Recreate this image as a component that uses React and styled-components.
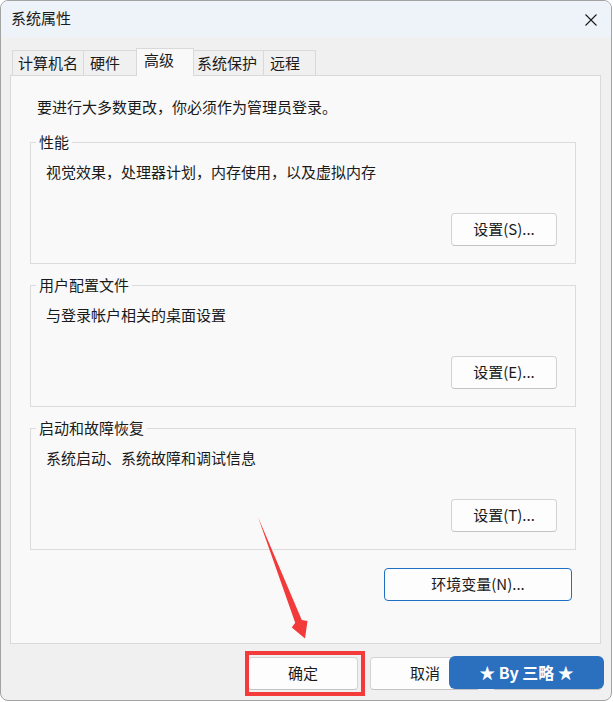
import React from "react";
import styled, { createGlobalStyle } from "styled-components";

const GlobalStyle = createGlobalStyle`
  html, body { margin: 0; padding: 0; background: #ffffff; }
  body {
    font-family: "Noto Sans CJK SC", "Noto Sans", sans-serif;
    color: #1a1a1a;
  }
  * { box-sizing: border-box; }
`;

const Window = styled.div`
  position: relative;
  width: 612px;
  height: 701px;
  border: 1px solid #a3a3a3;
  border-radius: 8px;
  overflow: hidden;
  background: #f0f0f0;
  display: flex;
  flex-direction: column;
`;

const TitleBar = styled.div`
  height: 36px;
  flex: none;
  background: #eef3f9;
  display: flex;
  align-items: center;
  justify-content: space-between;
  padding: 0 14px 2px 10px;
`;

const Title = styled.span`
  font-size: 15px;
  line-height: 20px;
`;

const CloseButton = styled.div`
  width: 12px;
  height: 12px;
  display: flex;
  margin-top: 3px;
`;

const TabStrip = styled.div`
  display: flex;
  align-items: flex-start;
  height: 28px;
  margin: 11px 0 0 11px;
  position: relative;
  z-index: 1;
`;

const Tab = styled.div`
  width: ${(p) => p.$w}px;
  margin-left: ${(p) => p.$ml}px;
  padding-left: ${(p) => p.$pl}px;
  height: ${(p) => (p.$active ? 28 : 25)}px;
  margin-top: ${(p) => (p.$active ? 0 : 2)}px;
  border: 1px solid #d9d9d9;
  border-bottom: none;
  background: ${(p) => (p.$active ? "#f9f9f9" : "#f0f0f0")};
  position: relative;
  z-index: ${(p) => (p.$active ? 2 : 1)};
  font-size: 15px;
  line-height: 20px;
  padding-top: ${(p) => (p.$active ? 1 : 2)}px;
  white-space: nowrap;
`;

const Panel = styled.div`
  margin: -1px 10px 0 9px;
  height: 569px;
  flex: none;
  background: #f9f9f9;
  border: 1px solid #d9d9d9;
  padding: 21px 24px 0 19px;
  display: flex;
  flex-direction: column;
`;

const Intro = styled.div`
  font-size: 15px;
  line-height: 20px;
  padding-left: 7px;
  margin-bottom: 15px;
`;

const Group = styled.fieldset`
  margin: 0 0 11px 0;
  padding: 9px 18px 17px 15px;
  border: 1px solid #dcdcdc;
  min-width: 0;
  display: flex;
  flex-direction: column;
`;

const Legend = styled.legend`
  font-size: 15px;
  line-height: 19px;
  padding: 0 3px 2px;
  margin-left: -10px;
`;

const Desc = styled.div`
  font-size: 15px;
  line-height: 20px;
  margin-bottom: 31px;
`;

const ButtonRow = styled.div`
  display: flex;
  justify-content: flex-end;
  padding-right: ${(p) => p.$pr || 0}px;
  margin-top: ${(p) => p.$mt || 0}px;
`;

const Button = styled.div`
  width: ${(p) => p.$w}px;
  height: 33px;
  flex: none;
  display: flex;
  align-items: center;
  justify-content: center;
  padding-bottom: 2px;
  background: #fdfdfd;
  border: 1px solid ${(p) => (p.$focus ? "#1f6fc5" : "#d3d3d3")};
  border-bottom-color: ${(p) => (p.$focus ? "#1f6fc5" : "#c3c3c3")};
  border-radius: 4px;
  font-size: 15px;
  line-height: 20px;
  color: #1a1a1a;
`;

const BottomBar = styled.div`
  display: flex;
  justify-content: flex-end;
  gap: 12px;
  padding: 13px 9px 0 0;
`;

const Overlay = styled.svg`
  position: absolute;
  left: -1px;
  top: -1px;
  width: 613px;
  height: 702px;
  pointer-events: none;
  z-index: 5;
`;

const RedBox = styled.div`
  position: absolute;
  left: 244px;
  top: 650px;
  width: 120px;
  height: 45px;
  border: 4px solid #f33b3b;
  z-index: 4;
  pointer-events: none;
`;

const Watermark = styled.div`
  position: absolute;
  left: 448px;
  top: 655px;
  width: 155px;
  height: 33px;
  border-radius: 6px;
  background: #2b6fbf;
  color: #ffffff;
  font-family: "Noto Sans CJK SC", "Noto Sans", sans-serif;
  font-weight: 700;
  font-size: 16px;
  line-height: 20px;
  padding-bottom: 1px;
  display: flex;
  align-items: center;
  justify-content: center;
  z-index: 6;
`;

const tabs = [
  { label: "计算机名", w: 72, ml: 0, pl: 5 },
  { label: "硬件", w: 55, ml: -1, pl: 6 },
  { label: "高级", w: 58, ml: -2, pl: 7, active: true },
  { label: "系统保护", w: 71, ml: -1, pl: 3 },
  { label: "远程", w: 53, ml: -1, pl: 6 },
];

const groups = [
  { legend: "性能", desc: "视觉效果，处理器计划，内存使用，以及虚拟内存", btn: "设置(S)..." },
  { legend: "用户配置文件", desc: "与登录帐户相关的桌面设置", btn: "设置(E)..." },
  { legend: "启动和故障恢复", desc: "系统启动、系统故障和调试信息", btn: "设置(T)..." },
];

export default function App() {
  return (
    <>
      <GlobalStyle />
      <Window>
        <TitleBar>
          <Title>系统属性</Title>
          <CloseButton>
            <svg width="12" height="12" viewBox="0 0 12 12">
              <path d="M0.5 0.5 L11.5 11.5 M11.5 0.5 L0.5 11.5" stroke="#1a1a1a" strokeWidth="1.1" fill="none" />
            </svg>
          </CloseButton>
        </TitleBar>

        <TabStrip>
          {tabs.map((t) => (
            <Tab key={t.label} $w={t.w} $ml={t.ml} $pl={t.pl} $active={t.active}>
              {t.label}
            </Tab>
          ))}
        </TabStrip>

        <Panel>
          <Intro>要进行大多数更改，你必须作为管理员登录。</Intro>
          {groups.map((g) => (
            <Group key={g.legend}>
              <Legend>{g.legend}</Legend>
              <Desc>{g.desc}</Desc>
              <ButtonRow>
                <Button $w={106}>{g.btn}</Button>
              </ButtonRow>
            </Group>
          ))}
          <ButtonRow $pr={4} $mt={7}>
            <Button $w={188} $focus>环境变量(N)...</Button>
          </ButtonRow>
        </Panel>

        <BottomBar>
          <Button $w={110}>确定</Button>
          <Button $w={110}>取消</Button>
          <Button $w={110} aria-label="应用(A)" />
        </BottomBar>

        <RedBox />
        <Overlay viewBox="0 0 613 702">
          <polygon
            points="258,517 301.8,620.1 307.5,621.1 305,638.5 291.8,627.4 295.2,622.7"
            fill="#f23a3a"
          />
        </Overlay>
        <Watermark>★ By 三略 ★</Watermark>
      </Window>
    </>
  );
}
